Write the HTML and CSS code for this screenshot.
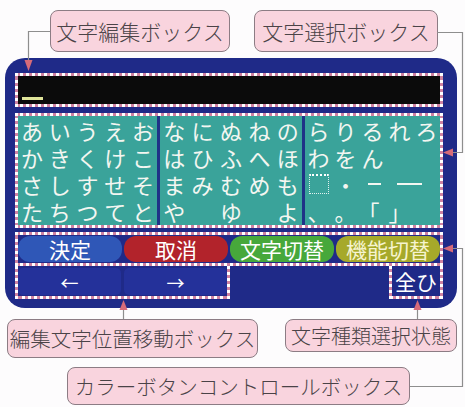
FILE: index.html
```html
<!DOCTYPE html>
<html lang="ja">
<head>
<meta charset="utf-8">
<link rel="stylesheet" href="styles.css">
</head>
<body>
<div class="page">
  <div class="top-callouts">
    <div class="callout c-edit">文字編集ボックス</div>
    <div class="callout c-select">文字選択ボックス</div>
  </div>

  <div class="panel">
    <div class="dash editbox">
      <div class="edit-inner"><span class="cursor"></span></div>
    </div>

    <div class="dash gridbox">
      <div class="grid">
        <div class="col col1">
          <span>あ</span><span>い</span><span>う</span><span>え</span><span>お</span>
          <span>か</span><span>き</span><span>く</span><span>け</span><span>こ</span>
          <span>さ</span><span>し</span><span>す</span><span>せ</span><span>そ</span>
          <span>た</span><span>ち</span><span>つ</span><span>て</span><span>と</span>
        </div>
        <div class="sep"></div>
        <div class="col col2">
          <span>な</span><span>に</span><span>ぬ</span><span>ね</span><span>の</span>
          <span>は</span><span>ひ</span><span>ふ</span><span>へ</span><span>ほ</span>
          <span>ま</span><span>み</span><span>む</span><span>め</span><span>も</span>
          <span>や</span><span></span><span>ゆ</span><span></span><span>よ</span>
        </div>
        <div class="sep"></div>
        <div class="col col3">
          <span>ら</span><span>り</span><span>る</span><span>れ</span><span>ろ</span>
          <span>わ</span><span>を</span><span>ん</span><span></span><span></span>
          <span><i class="space-mark"></i></span><span>・</span><span><i class="dash-short"></i></span><span><i class="dash-long"></i></span><span></span>
          <span>、</span><span>。</span><span class="open-br">「</span><span>」</span><span></span>
        </div>
      </div>
    </div>

    <div class="controls">
      <div class="dash btnrow">
        <div class="btns">
          <div class="btn blue">決定</div>
          <div class="btn red">取消</div>
          <div class="btn green">文字切替</div>
          <div class="btn olive">機能切替</div>
        </div>
      </div>
      <div class="lower">
        <div class="dash arrows">
          <div class="arrow-inner">
            <div class="abtn">←</div>
            <div class="abtn">→</div>
          </div>
        </div>
        <div class="dash mode">
          <div class="mode-inner">全ひ</div>
        </div>
      </div>
    </div>
  </div>

  <div class="bottom">
    <div class="callout c-move">編集文字位置移動ボックス</div>
    <div class="callout c-kind">文字種類選択状態</div>
  </div>
  <div class="callout c-color">カラーボタンコントロールボックス</div>

  <svg class="wires" width="465" height="407" viewBox="0 0 465 407">
    <g fill="none" stroke="#8e8e8e" stroke-width="1.2">
      <polyline points="50,31.5 28.5,31.5 28.5,61"/>
      <polyline points="437,32.5 462.5,32.5 462.5,152.5 452,152.5"/>
      <line x1="123.5" y1="319" x2="123.5" y2="309"/>
      <line x1="417.5" y1="319" x2="417.5" y2="309"/>
      <polyline points="410,386.5 462.5,386.5 462.5,248.5 452,248.5"/>
    </g>
    <g fill="#d66b79">
      <polygon points="24.5,60 32.5,60 28.5,71"/>
      <polygon points="453,148.5 453,156.5 443,152.5"/>
      <polygon points="119.5,310 127.5,310 123.5,300"/>
      <polygon points="413.5,310 421.5,310 417.5,300"/>
      <polygon points="453,244.5 453,252.5 443,248.5"/>
    </g>
  </svg>
</div>
</body>
</html>
```

FILE: styles.css
```css
* {
  box-sizing: border-box;
  margin: 0;
  padding: 0;
}

body {
  margin: 0;
  width: 465px;
  height: 407px;
  overflow: hidden;
  background: #fdfcfd;
  font-family: "Noto Sans CJK JP", "Noto Sans", sans-serif;
}

.page {
  position: relative;
  width: 465px;
  height: 407px;
  background: #fdfcfd;
}

/* callouts */
.callout {
  background: #f9d4de;
  border: 1.5px solid #8c7c84;
  border-radius: 8px;
  color: #4a4347;
  font-size: 21px;
  font-weight: 300;
  line-height: 1;
  white-space: nowrap;
  display: flex;
  align-items: center;
  justify-content: center;
}

.top-callouts {
  display: flex;
  gap: 24px;
  height: 58px;
  padding: 10px 0 0 50px;
}

.c-edit {
  width: 180px;
  height: 42px;
}

.c-select {
  width: 184px;
  height: 42px;
}

.bottom {
  display: flex;
  align-items: flex-start;
  gap: 27px;
  padding: 11px 0 0 7px;
}

.c-move {
  width: 251px;
  height: 39px;
  font-size: 20.5px;
}

.c-kind {
  width: 172px;
  height: 33px;
  font-size: 20px;
}

.c-color {
  margin: 9px 0 0 67px;
  width: 343px;
  height: 38px;
  font-size: 20.5px;
}

/* device panel */
.panel {
  margin-left: 5px;
  width: 452px;
  height: 250px;
  background: #1f2a88;
  border-radius: 20px;
  padding: 15px 14px 9px 10px;
  display: flex;
  flex-direction: column;
}

.dash {
  border: 3px dotted #ffffff;
  background: #cf82a2;
}

.editbox {
  height: 34px;
}

.edit-inner {
  height: 100%;
  background: #0b0b0b;
  padding: 21px 0 0 4px;
}

.cursor {
  display: block;
  width: 21px;
  height: 3px;
  background: #dfe49a;
}

.gridbox {
  margin-top: 6px;
  height: 115px;
}

.grid {
  height: 100%;
  background: #3aa39a;
  display: flex;
}

.col {
  display: grid;
  grid-template-columns: repeat(5, minmax(0, 1fr));
  grid-template-rows: repeat(4, minmax(0, 1fr));
  color: #f3f6f1;
  font-size: 22px;
  line-height: 1;
}

.col span {
  display: flex;
  align-items: center;
  justify-content: center;
  min-width: 0;
}

.col1 {
  width: 139px;
}

.col2 {
  width: 142px;
}

.col3 {
  flex: 1;
}

.sep {
  width: 3px;
  background: #1f3287;
}

.open-br {
  padding-right: 8px;
}

.space-mark {
  display: block;
  width: 20px;
  height: 20px;
  border: 1.5px dotted rgba(255, 255, 255, 0.85);
  border-top: 2px dotted #ffffff;
}

.dash-short {
  display: block;
  width: 13px;
  height: 2px;
  margin-left: 4px;
  background: #f3f6f1;
}

.dash-long {
  display: block;
  flex: none;
  width: 25px;
  height: 2px;
  margin-left: 10px;
  margin-right: -10px;
  background: #f3f6f1;
}

/* controls */
.controls {
  margin-top: 4px;
}

.btnrow {
  height: 34px;
}

.btns {
  height: 100%;
  background: #1f2a88;
  display: grid;
  grid-template-columns: repeat(4, 1fr);
  gap: 2px;
  padding: 1px 0;
}

.btn {
  border-radius: 12px;
  color: #ffffff;
  font-size: 21px;
  line-height: 1;
  white-space: nowrap;
  display: flex;
  align-items: center;
  justify-content: center;
}

.blue {
  background: #2f57b7;
}

.red {
  background: #b2232b;
}

.green {
  background: #47a83b;
}

.olive {
  background: #a6a92a;
  color: #f6f4cf;
}

.lower {
  display: flex;
  justify-content: space-between;
  height: 33px;
}

.lower .dash {
  border-top: 0;
}

.arrows {
  width: 215px;
}

.arrow-inner {
  height: 100%;
  background: #1f2a88;
  display: grid;
  grid-template-columns: 1fr 1fr;
  gap: 3px;
  padding: 2px 0 1px;
}

.abtn {
  background: #24319a;
  border-radius: 5px;
  color: #ffffff;
  font-size: 18px;
  line-height: 1;
  display: flex;
  align-items: center;
  justify-content: center;
}

.mode {
  width: 54px;
}

.mode-inner {
  height: 100%;
  background: #1f2a88;
  color: #ffffff;
  font-size: 21px;
  line-height: 1;
  display: flex;
  align-items: center;
  justify-content: center;
}

.wires {
  position: absolute;
  top: 0;
  left: 0;
  pointer-events: none;
}
```
